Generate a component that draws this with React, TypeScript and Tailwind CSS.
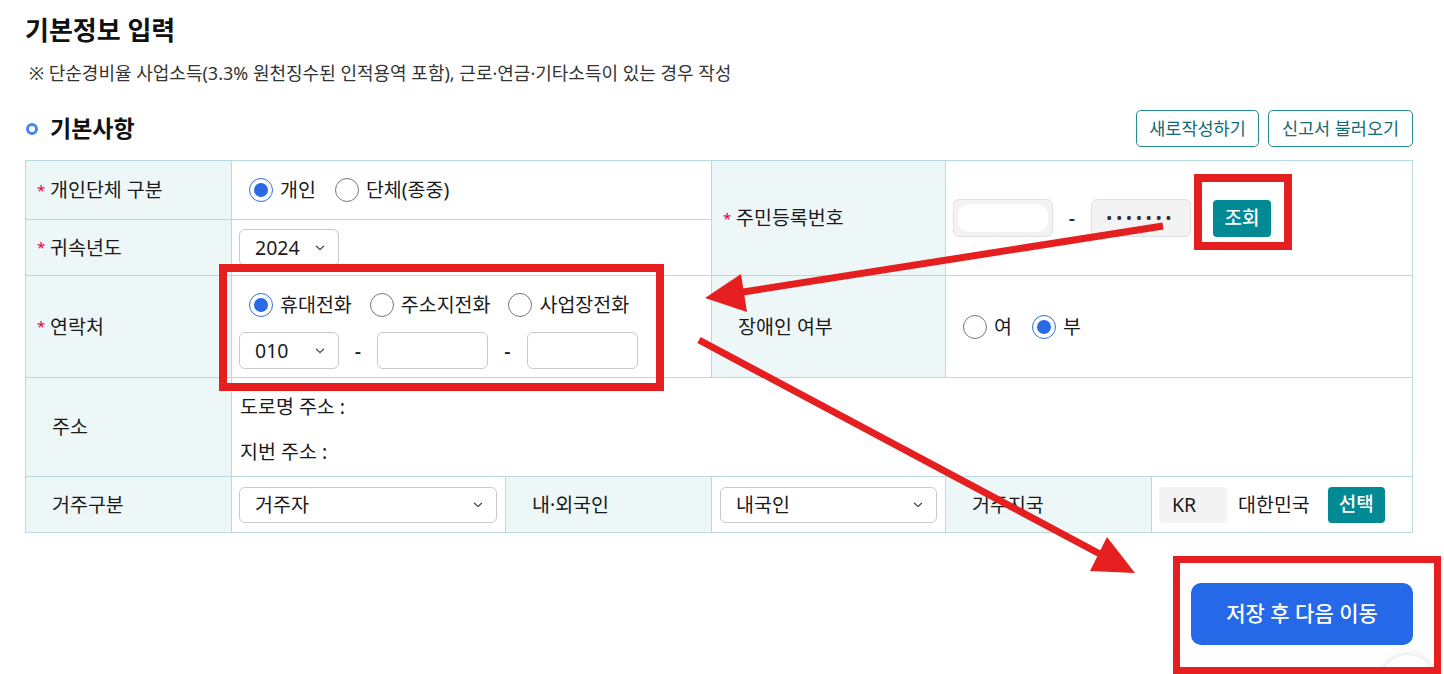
import React from "react";

const F = { fontFamily: '"Noto Sans", "Noto Sans CJK KR", sans-serif' };

function Radio({ checked, label }: { checked?: boolean; label: string }) {
  return (
    <span className="flex items-center gap-[7px]">
      {checked ? (
        <span className="w-[24px] h-[24px] rounded-full border-[1.5px] border-[#2f6fe4] flex items-center justify-center bg-white">
          <span className="w-[14px] h-[14px] rounded-full bg-[#2a6ae6]" />
        </span>
      ) : (
        <span className="w-[24px] h-[24px] rounded-full border border-[#767676] bg-white" />
      )}
      <span className="leading-[24px]">{label}</span>
    </span>
  );
}

function Chevron() {
  return (
    <svg width="10" height="6" viewBox="0 0 10 6" fill="none">
      <path d="M1.5 1.2 L5 4.6 L8.5 1.2" stroke="#4a4a4a" strokeWidth="1.3" strokeLinecap="round" strokeLinejoin="round" />
    </svg>
  );
}

function Select({ value, w, h }: { value: string; w: string; h: string }) {
  return (
    <div className={`${w} ${h} border border-[#c9c9c9] rounded-[6px] bg-white flex items-center justify-between pl-[15px] pr-[13px]`}>
      <span>{value}</span>
      <Chevron />
    </div>
  );
}

function Label({ text, req }: { text: string; req?: boolean }) {
  return (
    <div className={`bg-[#eef7f7] flex items-center ${req ? "pl-[11px]" : "pl-[26px]"}`}>
      {req && <span className="w-[13px] text-[15px] text-[#e0004d] leading-none">*</span>}
      <span>{text}</span>
    </div>
  );
}

export default function App() {
  return (
    <div className="relative w-[1444px] h-[674px] overflow-hidden bg-white text-[#1a1a1a] text-[19.5px]" style={F}>
      <div className="pl-[25px] pr-[31px] pt-[13px]">
        <h1 className="text-[26px] leading-[34px] font-bold text-[#111]">기본정보 입력</h1>
        <p className="mt-[15px] text-[18px] leading-[22px] text-[#333] pl-[4px]">
          ※ 단순경비율 사업소득(3.3% 원천징수된 인적용역 포함), 근로·연금·기타소득이 있는 경우 작성
        </p>

        <div className="mt-[26px] h-[37px] flex items-center justify-between">
          <div className="flex items-center gap-[12px] pl-[1px]">
            <span className="w-[12px] h-[12px] rounded-full border-[3px] border-[#4a86f0]" />
            <span className="text-[23px] font-bold text-[#111]">기본사항</span>
          </div>
          <div className="flex gap-[9px] text-[17.5px] text-[#136a70]">
            <button className="w-[123px] h-[37px] border border-[#218c93] rounded-[5px] bg-white">새로작성하기</button>
            <button className="w-[145px] h-[37px] border border-[#218c93] rounded-[5px] bg-white">신고서 불러오기</button>
          </div>
        </div>

        <div className="mt-[13px] grid grid-cols-[205px_273px_205px_233px_205px_260px] grid-rows-[58px_55px_101px_98px_55px] gap-px bg-[#b9dadd] border border-[#b9dadd]">
          {/* row 1 */}
          <Label text="개인단체 구분" req />
          <div className="col-span-2 bg-white flex items-center pl-[17px] gap-[19px]">
            <Radio checked label="개인" />
            <Radio label="단체(종중)" />
          </div>
          <div className="row-span-2 bg-[#eef7f7] flex items-center pl-[11px]">
            <span className="w-[13px] text-[15px] text-[#e0004d] leading-none">*</span>
            <span>주민등록번호</span>
          </div>
          <div className="col-span-2 row-span-2 bg-white flex items-center pl-[7px]">
            <div className="w-[100px] h-[38px] bg-[#f3f3f3] border border-[#e1e1e1] rounded-[6px] p-[4px] flex">
              <div className="flex-1 bg-white rounded-[12px]" />
            </div>
            <span className="w-[38px] text-center font-medium">-</span>
            <div className="w-[100px] h-[38px] bg-[#f3f3f3] border border-[#e1e1e1] rounded-[6px] flex items-center pl-[14px] text-[17px] tracking-[3.5px] text-[#333]">
              •••••••
            </div>
            <button className="ml-[22px] w-[58px] h-[37px] bg-[#018a93] rounded-[4px] text-white text-[19px] font-medium">조회</button>
          </div>

          {/* row 2 */}
          <Label text="귀속년도" req />
          <div className="col-span-2 bg-white flex items-center pl-[7px]">
            <Select value="2024" w="w-[100px]" h="h-[37px]" />
          </div>

          {/* row 3 */}
          <Label text="연락처" req />
          <div className="col-span-2 bg-white flex flex-col pl-[7px] pt-[17px]">
            <div className="flex items-center gap-[18px] pl-[10px]">
              <Radio checked label="휴대전화" />
              <Radio label="주소지전화" />
              <Radio label="사업장전화" />
            </div>
            <div className="mt-[15px] flex items-center">
              <Select value="010" w="w-[100px]" h="h-[37px]" />
              <span className="w-[38px] text-center font-medium">-</span>
              <div className="w-[111px] h-[37px] border border-[#c9c9c9] rounded-[6px] bg-white" />
              <span className="w-[39px] text-center font-medium">-</span>
              <div className="w-[111px] h-[37px] border border-[#c9c9c9] rounded-[6px] bg-white" />
            </div>
          </div>
          <Label text="장애인 여부" />
          <div className="col-span-2 bg-white flex items-center pl-[17px] gap-[20px]">
            <Radio label="여" />
            <Radio checked label="부" />
          </div>

          {/* row 4 */}
          <Label text="주소" />
          <div className="col-span-5 bg-white flex flex-col pl-[8px] pt-[17px] gap-[21px] leading-[24px]">
            <span>도로명 주소 :</span>
            <span>지번 주소 :</span>
          </div>

          {/* row 5 */}
          <Label text="거주구분" />
          <div className="bg-white flex items-center pl-[7px]">
            <Select value="거주자" w="w-[258px]" h="h-[36px]" />
          </div>
          <Label text="내·외국인" />
          <div className="bg-white flex items-center pl-[8px]">
            <Select value="내국인" w="w-[217px]" h="h-[36px]" />
          </div>
          <Label text="거주지국" />
          <div className="bg-white flex items-center pl-[7px]">
            <div className="w-[68px] h-[36px] bg-[#f3f3f3] rounded-[4px] flex items-center pl-[13px]">KR</div>
            <span className="ml-[11px]">대한민국</span>
            <button className="ml-[18px] w-[57px] h-[36px] bg-[#018a93] rounded-[4px] text-white text-[19px] font-medium">선택</button>
          </div>
        </div>

        <div className="mt-[50px] flex justify-end">
          <button className="w-[222px] h-[62px] bg-[#2568e8] rounded-[10px] text-white text-[21px] font-medium">
            저장 후 다음 이동
          </button>
        </div>
      </div>

      {/* floating round button partially visible */}
      <div className="absolute left-[1381px] top-[655px] w-[54px] h-[54px] rounded-full bg-white shadow-[0_0_8px_rgba(0,0,0,0.15)]" />

      {/* red annotations */}
      <svg className="absolute inset-0 pointer-events-none" width="1444" height="674" viewBox="0 0 1444 674">
        <g fill="none" stroke="#e51f1f">
          <rect x="1198" y="178" width="90" height="68" strokeWidth="8" />
          <rect x="223" y="268" width="437" height="119" strokeWidth="8" />
          <rect x="1176.5" y="559.5" width="261" height="111" strokeWidth="7" />
          <line x1="1163" y1="226" x2="740" y2="292.5" strokeWidth="7" />
          <line x1="699" y1="340" x2="1100" y2="554" strokeWidth="7" />
        </g>
        <g fill="#e51f1f">
          <polygon points="705,298 741,274 747,312" />
          <polygon points="1135,573 1107,537 1090,571" />
        </g>
      </svg>
    </div>
  );
}
